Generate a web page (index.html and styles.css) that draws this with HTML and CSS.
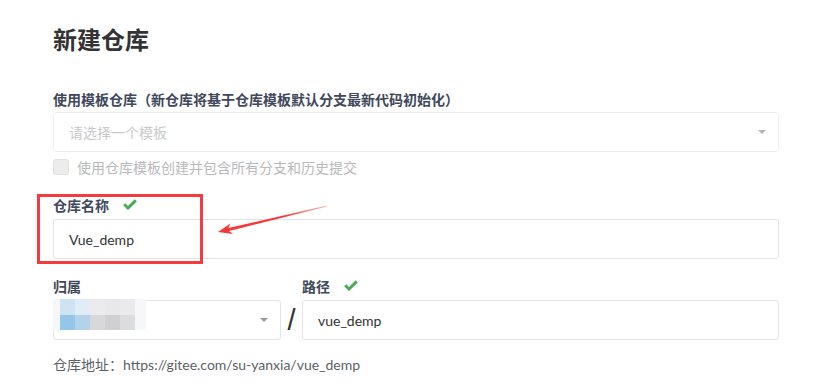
FILE: index.html
```html
<!DOCTYPE html>
<html lang="zh-CN">
<head>
  <meta charset="UTF-8" />
  <meta name="viewport" content="width=device-width, initial-scale=1.0"/>
  <title>新建仓库</title>
  <link rel="stylesheet" href="styles.css">
</head>
<body>
  <div class="page">
    <h1 class="title">新建仓库</h1>

    <div class="label label-first">使用模板仓库（新仓库将基于仓库模板默认分支最新代码初始化）</div>
    <div class="select is-disabled">
      <span class="placeholder">请选择一个模板</span>
      <i class="caret"></i>
    </div>
    <label class="check">
      <span class="check-box"></span>
      <span>使用仓库模板创建并包含所有分支和历史提交</span>
    </label>

    <div class="label label-name">
      仓库名称
      <svg class="ok" width="14" height="11" viewBox="0 0 14 11"><path d="M1.2 5.2 L5 9 L12.8 1.4" fill="none" stroke="#4cab55" stroke-width="3"/></svg>
    </div>
    <div class="input">Vue_demp</div>

    <div class="row">
      <div class="col col-owner">
        <div class="label">归属</div>
        <div class="select">
          <i class="caret"></i>
        </div>
        <!-- 打码 -->
        <div class="mosaic">
          <span style="background:#cfe3f3"></span><span style="background:#e0ecf6"></span><span style="background:#ebebed"></span><span style="background:#e8e8ea"></span><span style="background:#eaeaec"></span>
          <span style="background:#93c6e8"></span><span style="background:#b3d3ea"></span><span style="background:#d8d8da"></span><span style="background:#d0d0d3"></span><span style="background:#dcdcde"></span>
        </div>
      </div>
      <div class="slash">/</div>
      <div class="col col-path">
        <div class="label">
          路径
          <svg class="ok" width="14" height="11" viewBox="0 0 14 11"><path d="M1.2 5.2 L5 9 L12.8 1.4" fill="none" stroke="#4cab55" stroke-width="3"/></svg>
        </div>
        <div class="input">vue_demp</div>
      </div>
    </div>

    <div class="address">仓库地址：https://gitee.com/su-yanxia/vue_demp</div>

    <!-- 标注 -->
    <div class="mark"></div>
    <svg class="arrow" width="125" height="40" viewBox="0 0 125 40">
      <defs>
        <linearGradient id="fade" x1="0" y1="0" x2="1" y2="0">
          <stop offset="0" stop-color="#f23a3c"/>
          <stop offset="0.6" stop-color="#f23a3c"/>
          <stop offset="1" stop-color="#f23a3c" stop-opacity="0.35"/>
        </linearGradient>
      </defs>
      <polygon fill="url(#fade)" points="8,32 20.4,23.6 18.4,28 117,5.6 117.1,6.4 19.1,31 23,34"/>
    </svg>
  </div>
</body>
</html>
```

FILE: styles.css
```css
body {
  margin: 0;
  background: #fff;
  font-family: Lato, "Noto Sans CJK SC", sans-serif;
  font-size: 14px;
  color: #40485b;
}
.page {
  position: relative;
  width: 726px;
  margin-left: 53px;
  padding-top: 24px;
}
.title {
  margin: 0;
  font-size: 24px;
  line-height: 32px;
  font-weight: 700;
  color: #333;
}
.label {
  display: flex;
  align-items: center;
  gap: 14px;
  height: 20px;
  font-size: 14px;
  font-weight: 700;
  color: #40485b;
}
.label-first {
  margin-top: 33px;
}
.label-name {
  margin-top: 18px;
}
.ok {
  display: block;
  margin-top: -1px;
}

.select,
.input {
  box-sizing: border-box;
  height: 40px;
  border: 1px solid #e3e4e8;
  border-radius: 3px;
  display: flex;
  align-items: center;
  padding: 0 15px;
  background: #fff;
}
.select {
  margin-top: 3px;
  justify-content: space-between;
}
.select.is-disabled {
  border-color: #eeeff2;
}
.placeholder {
  color: #c9c9cc;
}
.caret {
  width: 0;
  height: 0;
  border-left: 4px solid transparent;
  border-right: 4px solid transparent;
  border-top: 4px solid #9a9a9a;
  margin-left: auto;
  margin-right: -3px;
}
.is-disabled .caret {
  border-top-color: #b4b4b4;
}

.check {
  display: flex;
  align-items: center;
  gap: 8px;
  margin-top: 5px;
  height: 20px;
  color: #b9b9bb;
}
.check-box {
  box-sizing: border-box;
  width: 16px;
  height: 16px;
  border: 1px solid #e0e0e0;
  border-radius: 3px;
  background: #ececec;
}

.input {
  margin-top: 4px;
  color: #333;
}

.row {
  display: flex;
  margin-top: 17px;
}
.col {
  position: relative;
}
.col .select,
.col .input {
  margin-top: 4px;
}
.col-owner {
  width: 228px;
}
.col-path {
  flex: 1;
}
.slash {
  width: 21px;
  padding-top: 24px;
  text-align: center;
  font-family: "Liberation Sans", sans-serif;
  font-size: 29px;
  line-height: 40px;
  color: #333;
}

.mosaic {
  position: absolute;
  left: 7px;
  top: 23px;
  display: grid;
  grid-template-columns: repeat(5, 15px);
  grid-template-rows: 16px 15px;
  box-shadow: -7px 0 0 #f6f7f9, 11px 0 0 #f6f7f9;
}

.address {
  margin-top: 15px;
  height: 20px;
  line-height: 20px;
  color: #5b5f68;
}

.mark {
  position: absolute;
  left: -16px;
  top: 194px;
  width: 160px;
  height: 64px;
  border: 3px solid #f43b3d;
}
.arrow {
  position: absolute;
  left: 157px;
  top: 200px;
}
```
